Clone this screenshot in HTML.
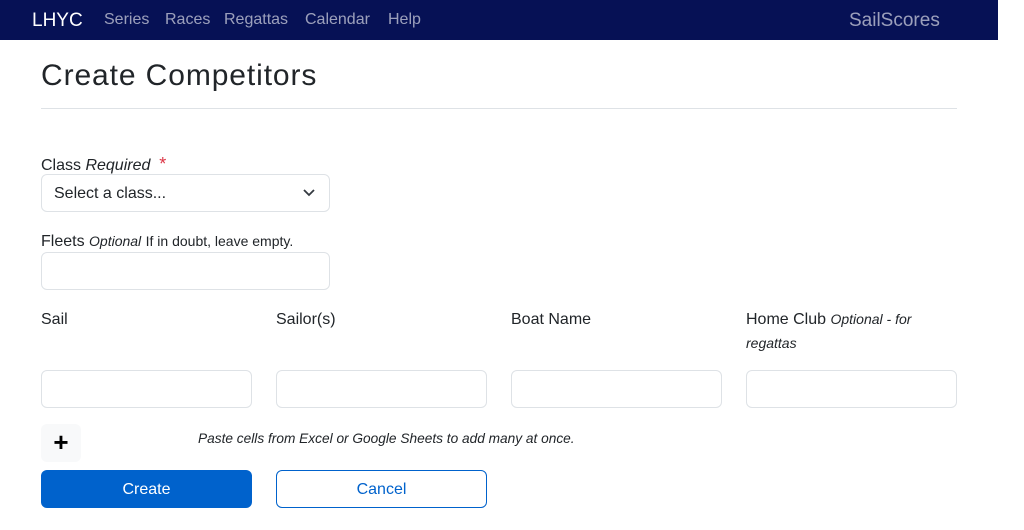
<!DOCTYPE html>
<html><head><meta charset="utf-8"><style>
*{box-sizing:border-box;margin:0;padding:0}
body{width:1024px;height:530px;background:#fff;font-family:"Liberation Sans",sans-serif;color:#212529;position:relative;overflow:hidden}
.a{position:absolute;white-space:nowrap}
.nav{position:absolute;left:0;top:0;width:998px;height:40px;background:#061155}
.nl{color:rgba(255,255,255,.6);font-size:16px;top:11px}
.inp{position:absolute;border:1px solid #dee2e6;border-radius:6px;height:38px;background:#fff}
.lbl{font-size:16px}
i{font-size:14px}
</style></head><body>
<div class="nav"></div>
<div class="a" style="left:32px;top:10px;font-size:19px;color:#fff">LHYC</div>
<div class="a nl" style="left:104px">Series</div>
<div class="a nl" style="left:165px">Races</div>
<div class="a nl" style="left:224px">Regattas</div>
<div class="a nl" style="left:305px">Calendar</div>
<div class="a nl" style="left:388px">Help</div>
<div class="a" style="left:849px;top:10px;font-size:19px;color:rgba(255,255,255,.6)">SailScores</div>
<div class="a" style="left:41px;top:59px;font-size:30px;letter-spacing:0.9px">Create Competitors</div>
<div class="a" style="left:41px;top:108px;width:916px;height:1px;background:#dee2e6"></div>
<div class="a lbl" style="left:41px;top:154px">Class <i style="font-size:16px">Required</i> &nbsp;<span style="color:#dc3545;font-size:18px">*</span></div>
<div class="inp" style="left:41px;top:174px;width:289px"></div>
<div class="a" style="left:54px;top:185px;font-size:16px">Select a class...</div>
<svg class="a" style="left:302px;top:187px" width="14" height="12" viewBox="0 0 14 12"><path d="M2 3l5 5 5-5" fill="none" stroke="#343a40" stroke-width="1.8"/></svg>
<div class="a lbl" style="left:41px;top:233px">Fleets <i>Optional</i> <span style="font-size:14px">If in doubt, leave empty.</span></div>
<div class="inp" style="left:41px;top:252px;width:289px"></div>
<div class="a lbl" style="left:41px;top:311px">Sail</div>
<div class="a lbl" style="left:276px;top:311px">Sailor(s)</div>
<div class="a lbl" style="left:511px;top:311px">Boat Name</div>
<div class="a lbl" style="left:746px;top:311px">Home Club <i>Optional - for</i></div>
<div class="a" style="left:746px;top:335px"><i>regattas</i></div>
<div class="inp" style="left:41px;top:370px;width:211px"></div>
<div class="inp" style="left:276px;top:370px;width:211px"></div>
<div class="inp" style="left:511px;top:370px;width:211px"></div>
<div class="inp" style="left:746px;top:370px;width:211px"></div>
<div class="a" style="left:41px;top:424px;width:40px;height:38px;background:#f8f9fa;border-radius:6px;text-align:center;font-size:26px;line-height:36px;font-weight:bold;color:#000">+</div>
<div class="a" style="left:198px;top:430px"><i style="font-size:13.7px">Paste cells from Excel or Google Sheets to add many at once.</i></div>
<div class="a" style="left:41px;top:470px;width:211px;height:38px;background:#0062cc;border-radius:6px;color:#fff;font-size:16px;text-align:center;line-height:39px">Create</div>
<div class="a" style="left:276px;top:470px;width:211px;height:38px;border:1px solid #0062cc;border-radius:6px;color:#0062cc;font-size:16px;text-align:center;line-height:37px">Cancel</div>
</body></html>
